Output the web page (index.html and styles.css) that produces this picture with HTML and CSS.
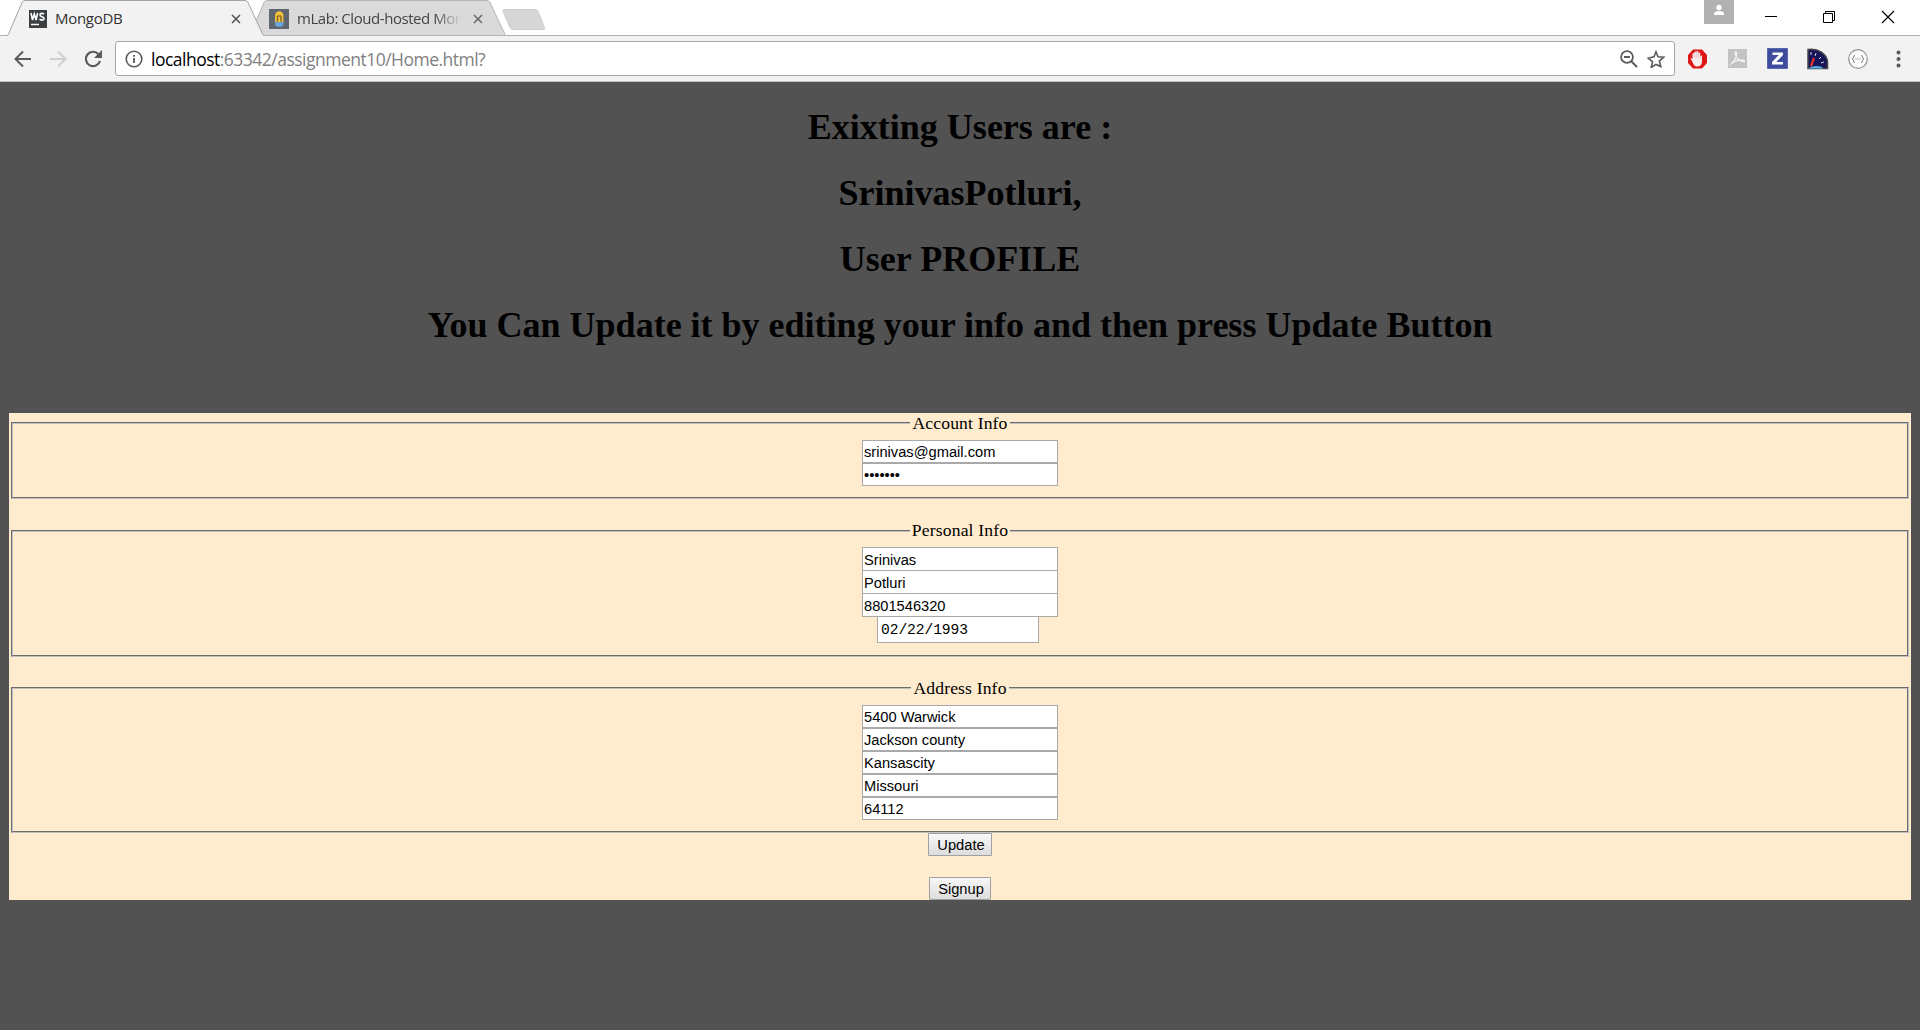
FILE: index.html
```html
<!DOCTYPE html>
<html lang="en">
<head>
<meta charset="utf-8">
<title>MongoDB</title>
<link rel="stylesheet" href="styles.css">
</head>
<body>
<header class="tabstrip">
  <div class="tab tab-active">
    <svg class="tab-shape" width="260" height="36" viewBox="0 0 260 36"><path d="M0 35.5H1Q2 35.5 2.6 34L16 2.5Q17 .5 19 .5H239Q241 .5 242 2.5L256.500 34Q257 35.500 259 35.500V36H0Z" fill="#f2f2f2"/><path d="M0 35.5H1Q2 35.5 2.6 34L16 2.5Q17 .5 19 .5H239Q241 .5 242 2.5L256.500 34Q257 35.500 259 35.500" fill="none" stroke="#a3a3a3"/></svg>
    <svg class="favicon" width="18" height="18" viewBox="0 0 18 18"><path d="M0 0H18V18H0Z" fill="#3b3f42"/><path d="M2 3l1.500 7 1.800-6 1.800 6L8.600 3M15 4.200C13.500 2.800 11 3.200 11 5c0 2 4 1.300 4 3.400 0 2-3 2.200-4.500.8" fill="none" stroke="#fff" stroke-width="1.600"/><path d="M2 14.500h8" stroke="#fff" stroke-width="1.500"/></svg>
    <span class="tab-title title-mongo">MongoDB</span>
    <svg class="tab-close" width="10" height="10" viewBox="0 0 10 10"><path d="M1 1l8 8M9 1L1 9" stroke="#4f4f4f" stroke-width="1.500"/></svg>
  </div>
  <div class="tab tab-back">
    <svg class="tab-shape" width="260" height="36" viewBox="0 0 260 36"><path d="M2.600 34L16 2.500Q17 .5 19 .5H239Q241 .5 242 2.500L257.500 35.500H2Z" fill="#dadada" stroke="#b5b5b5"/></svg>
    <svg class="favicon" width="20" height="20" viewBox="0 0 20 20"><path d="M0 0H20V20H0Z" fill="#5f6670"/><path d="M6 14V6.500a4.200 4.200 0 0 1 8.400 0V14Z" fill="#f5c13c"/><path d="M6 13h8.400v3q-1.200 2-4.200 2T6 16Z" fill="#6ba5d9"/><path d="M8.300 13V7h3.800v6M8.300 10h1M11.100 10h1" fill="none" stroke="#665426"/></svg>
    <span class="tab-title title-mlab">mLab: Cloud-hosted Mon</span>
    <svg class="tab-close" width="10" height="10" viewBox="0 0 10 10"><path d="M1 1l8 8M9 1L1 9" stroke="#666" stroke-width="1.500"/></svg>
  </div>
  <svg class="new-tab" width="44" height="22" viewBox="0 0 44 22"><path d="M2.500.5H33Q35 .5 36 2.500L42.500 18.500Q43 20.500 41 20.500H11Q9 20.500 8 18.500L1 2.500Q.5.5 2.500.5Z" fill="#d6d6d6" stroke="#cccccc"/></svg>
  <div class="window-controls">
    <svg class="avatar" width="30" height="24" viewBox="0 0 30 24"><path d="M0 0H30V24H0Z" fill="#b1b1b1"/><circle cx="15" cy="7.500" r="2.700" fill="#fff"/><path d="M10 15v-1.500q0-2.500 5-2.500t5 2.500V15Z" fill="#fff"/></svg>
    <svg class="control" width="58" height="34" viewBox="0 0 58 34"><path d="M23 16.500h12" stroke="#000"/></svg>
    <svg class="control" width="58" height="34" viewBox="0 0 58 34"><path d="M23.500 13.500h9v9h-9ZM25.500 13.500v-2h9v9h-2" fill="none" stroke="#000"/></svg>
    <svg class="control" width="60" height="34" viewBox="0 0 60 34"><path d="M24 11l12 12M36 11L24 23" stroke="#000" stroke-width="1.200"/></svg>
  </div>
</header>
<nav class="toolbar">
  <svg class="nav-icon" width="36" height="24" viewBox="0 0 36 24"><path d="M31 12H16M23 4.500L15.500 12l7.500 7.500" fill="none" stroke="#5a5a5a" stroke-width="2"/></svg>
  <svg class="nav-icon" width="36" height="24" viewBox="0 0 36 24"><path d="M14 12h15M22 4.500l7.500 7.500-7.500 7.500" fill="none" stroke="#d0d0d0" stroke-width="2"/></svg>
  <svg class="nav-icon" width="43" height="24" viewBox="0 0 43 24"><path d="M26.500 7.200A7.200 7.200 0 1 0 28 14" fill="none" stroke="#5a5a5a" stroke-width="2.200"/><path d="M30 3v8h-8Z" fill="#5a5a5a"/></svg>
  <div class="omnibox">
    <svg class="info" width="18" height="18" viewBox="0 0 18 18"><circle cx="9" cy="9" r="7.800" fill="none" stroke="#5a5a5a" stroke-width="1.600"/><path d="M9 8v5M9 5v1.800" stroke="#5a5a5a" stroke-width="1.800"/></svg>
    <span class="url"><span class="host">localhost</span>:63342/assignment10/Home.html?</span>
    <svg class="zoom-icon" width="18" height="18" viewBox="0 0 18 18"><circle cx="7" cy="7" r="5.900" fill="none" stroke="#5a5a5a" stroke-width="1.800"/><path d="M4 7h6M11 11l6 6" stroke="#5a5a5a" stroke-width="1.900"/></svg>
    <svg class="star" width="18" height="18" viewBox="0 0 18 18"><path d="M9 1.800l2 5 5.800.4-4.400 3.700 1.400 5.600L9 14.400l-4.800 3.100 1.400-5.600-4.400-3.700L7 6.800Z" fill="none" stroke="#5a5a5a" stroke-width="1.600"/></svg>
  </div>
  <svg class="ext" width="40" height="24" viewBox="0 0 40 24"><path d="M15 2.500h9L29 8v8l-5 5.500h-9L10 16V8Z" fill="#df1717"/><path d="M14.500 15l-2-3.500q.8-1 2 .8V6.500q.9-1 1.800 0V5q1-1 2 0v-.5q1-1 2 0V6q1-.8 1.900 0v3q1-1 1.800 0v6q-.5 4-4 4.500h-2q-2-.5-3.500-4.500Z" fill="#f7eded"/><path d="M16.300 6.500v5M18.300 5v6M20.300 6v5M22.200 8v4" stroke="#d99c9c" stroke-width=".5"/></svg>
  <svg class="ext" width="40" height="24" viewBox="0 0 40 24"><path d="M10 2H29V21H10Z" fill="#c3c3c3"/><path d="M13 17c3-1 6-8 5.500-11.500-.8-1.500-2 0-1.200 2C18.500 11 21.500 14 25.500 15c2 0 1-2-1-1.800C20 13 15 14.500 13 17Z" fill="none" stroke="#f3f3f3" stroke-width="1.200"/></svg>
  <svg class="ext" width="40" height="24" viewBox="0 0 40 24"><path d="M9.500 1.500h20v20h-20Z" fill="#3e4c9d" stroke="#5967b1"/><path d="M14.500 5.500H25V8L18.300 15H25v2.500H14V15L20.800 8H14.500Z" fill="#fff"/></svg>
  <svg class="ext" width="40" height="24" viewBox="0 0 40 24"><path d="M10 2.500C21 1 28 7 29.500 14V21.500H10Z" fill="#17145a" stroke="#484848" stroke-width="1.500"/><path d="M10 21.500q6-4 14-1.500l1 1.500Z" fill="#55aee8"/><path d="M13 19l3-8" stroke="#f0332d" stroke-width="2.200"/><path d="M13 5v3M18 6l-1 3M23 10l-2 2M26 15l-3 1" stroke="#d7d7ed"/></svg>
  <svg class="ext" width="40" height="24" viewBox="0 0 40 24"><circle cx="20" cy="12" r="9.300" fill="#fcfcfc" stroke="#939393" stroke-width="1.200"/><path d="M17 8.500q-1.500 0-1.500 1.500t-1.500 2q1.500.5 1.500 2t1.500 1.500M23 8.500q1.500 0 1.500 1.500t1.500 2q-1.500.5-1.500 2T23 15.500M17.500 12h1M19.500 12h1M21.500 12h1" fill="none" stroke="#858585"/></svg>
  <svg class="ext" width="42" height="24" viewBox="0 0 42 24"><path d="M20.500 5.500h.01M20.500 12h.01M20.500 18.500h.01" stroke="#5a5a5a" stroke-width="4" stroke-linecap="round"/></svg>
</nav>
<main class="page">
  <section class="headings">
    <h1>Exixting Users are :</h1>
    <h1>SrinivasPotluri,</h1>
    <h1>User PROFILE</h1>
    <h1>You Can Update it by editing your info and then press Update Button</h1>
  </section>
  <form class="profile">
    <fieldset class="account">
      <legend>Account Info</legend>
      <input type="text" value="srinivas@gmail.com">
      <input type="password" value="1234567">
    </fieldset>
    <fieldset class="personal">
      <legend>Personal Info</legend>
      <input type="text" value="Srinivas">
      <input type="text" value="Potluri">
      <input type="text" value="8801546320">
      <input class="date" type="text" value="02/22/1993">
    </fieldset>
    <fieldset class="address">
      <legend>Address Info</legend>
      <input type="text" value="5400 Warwick">
      <input type="text" value="Jackson county">
      <input type="text" value="Kansascity">
      <input type="text" value="Missouri">
      <input type="text" value="64112">
    </fieldset>
    <button class="update" type="button">Update</button>
    <button class="signup" type="button">Signup</button>
  </form>
</main>
</body>
</html>
```
FILE: styles.css
```css
* { box-sizing: border-box; }
html { height: 100%; overflow: hidden; }
body {
  margin: 0;
  height: 100%;
  overflow: hidden;
  display: flex;
  flex-direction: column;
  background: #525252;
  font-family: "Liberation Serif", serif;
}
svg { display: block; flex: none; }

/* Browser tabs */
.tabstrip {
  display: flex;
  height: 36px;
  flex: none;
  padding: 0 2px 0 6px;
  background: #fff;
  border-bottom: 1px solid #b1b1b1;
  font-family: "Open Sans", sans-serif;
}
.tab {
  position: relative;
  display: flex;
  align-items: center;
  width: 259px;
  height: 36px;
  flex: none;
  padding: 0 24px 0 23px;
}
.tab-active { z-index: 2; }
.tab-back { margin-left: -17px; padding: 0 24px 0 21px; }
.tab-shape { position: absolute; left: 0; top: 0; z-index: -1; }
.tab-back { z-index: 1; }
.favicon { margin-top: 1px; }
.tab-title {
  flex: 1;
  overflow: hidden;
  white-space: nowrap;
  font-size: 15px;
  line-height: 20px;
  color: #333;
}
.title-mongo { margin-left: 8px; letter-spacing: -0.3px; }
.title-mlab {
  flex: none;
  width: 164px;
  margin-left: 8px;
  color: #444;
  letter-spacing: -0.45px;
  -webkit-mask-image: linear-gradient(to right, #000 84%, transparent 100%);
  mask-image: linear-gradient(to right, #000 84%, transparent 100%);
}
.tab-close { margin: 2px 0 0 auto; }
.new-tab { margin: 9px 0 0 -5px; }
.window-controls { display: flex; margin-left: auto; }
.avatar { margin-right: 8px; }

/* Address bar */
.toolbar {
  display: flex;
  align-items: center;
  flex: none;
  height: 46px;
  background: #f2f2f2;
  border-bottom: 1px solid #c5c5c5;
}
.omnibox {
  display: flex;
  align-items: center;
  flex: 1;
  height: 35px;
  margin-right: 3px;
  padding: 0 9px 0 10px;
  background: #fff;
  border: 1px solid #a6a6a6;
  border-radius: 3px;
}
.info { margin-left: -1px; }
.url {
  flex: 1;
  margin-left: 8px;
  font: 17.5px/24px "Open Sans", sans-serif;
  letter-spacing: -0.51px;
  color: #808080;
}
.host { color: #000; }
.star { margin-left: 9px; }

/* Page */
.page { padding: 12px 9px 0; }
.headings { height: 319px; text-align: center; }
h1 {
  margin: 0;
  font-size: 36px;
  line-height: 66px;
  white-space: nowrap;
  color: #000;
}
.profile {
  height: 487px;
  padding: 0 2px;
  display: flex;
  flex-direction: column;
  align-items: center;
  background: #ffebcd;
}
fieldset {
  width: 100%;
  margin: 0 0 21px;
  padding: 7px 0 0;
  border: 2px groove #c0c0c0;
}
.account { height: 86px; margin-bottom: 22px; }
.personal { height: 136px; padding-top: 6px; }
.address { height: 155px; margin-bottom: 0; }
legend {
  margin: 0 auto;
  padding: 0 2px;
  font-size: 17.6px;
  letter-spacing: 0.15px;
  line-height: 20px;
  color: #000;
}
.personal legend { height: 20px; line-height: 18px; }
input {
  display: block;
  width: 196px;
  height: 23px;
  margin: 0 auto;
  padding: 0 1px;
  border: 1px solid #a9a9a9;
  border-radius: 0;
  background: #fff;
  color: #000;
  font: 14.667px "Liberation Sans", sans-serif;
}
.personal input { height: 24px; margin-bottom: -1px; padding-top: 1px; }
.personal .date {
  position: relative;
  left: -2px;
  width: 162px;
  height: 27px;
  padding-left: 3px;
  font-family: "Liberation Mono", monospace;
  letter-spacing: -0.1px;
}
button {
  height: 23px;
  padding: 0 0 0 2px;
  border: 1px solid #a0a0a0;
  border-radius: 1px;
  background: linear-gradient(#f8f8f8, #dddddd);
  font: 14.667px "Liberation Sans", sans-serif;
  color: #000;
}
.update { width: 64px; margin-bottom: 21px; }
.signup { width: 62px; }
```
